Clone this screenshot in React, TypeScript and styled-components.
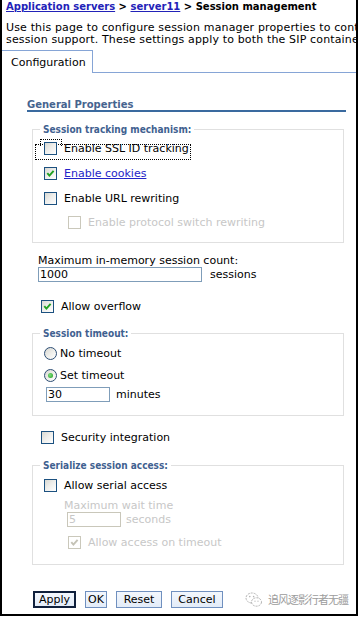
import React from "react";
import styled, { createGlobalStyle } from "styled-components";

const GlobalStyle = createGlobalStyle`
  html, body { margin: 0; padding: 0; background: #fff; }
  body {
    font-family: "DejaVu Sans", Verdana, sans-serif;
    font-size: 11px;
    color: #000;
  }
  * { box-sizing: border-box; }
`;

const Frame = styled.div`
  width: 358px;
  height: 616px;
  border-left: 2px solid #000;
  border-right: 2px solid #000;
  border-bottom: 2px solid #000;
  overflow: hidden;
  display: flex;
  flex-direction: column;
  background: #fff;
`;

const Breadcrumb = styled.div`
  margin-top: 1px;
  padding-left: 4px;
  font-size: 10px;
  font-weight: bold;
  line-height: 12px;
  white-space: nowrap;
`;

const CrumbLink = styled.a`
  color: #2222b8;
  text-decoration: underline;
`;

const Description = styled.div`
  margin-top: 9px;
  padding-left: 4px;
  line-height: 12px;
  letter-spacing: 0.15px;
  white-space: nowrap;
`;

const TabBar = styled.div`
  margin-top: 4px;
  display: flex;
  height: 23px;
`;

const Tab = styled.div`
  width: 91px;
  border-top: 1px solid #86a5d6;
  border-right: 1px solid #86a5d6;
  padding: 5px 0 0 9px;
  line-height: 13px;
`;

const TabFill = styled.div`
  flex: 1;
  border-bottom: 1px solid #86a5d6;
`;

const Body = styled.div`
  padding: 0 10px 0 25px;
  display: flex;
  flex-direction: column;
`;

const SectionHeading = styled.div`
  margin-top: 26px;
  font-size: 10px;
  font-weight: bold;
  line-height: 11px;
  color: #46648f;
  border-bottom: 2px solid #3a6a9f;
`;

const Group = styled.fieldset<{ $top: number; $pb: number }>`
  margin: ${(p) => p.$top}px 2px 0 5px;
  padding: 0 0 ${(p) => p.$pb}px 0;
  border: 1px solid #e0e0e0;
  min-width: 0;
`;

const Legend = styled.legend`
  margin-left: 7px;
  padding: 0 3px;
  font-family: "DejaVu Sans Condensed", "DejaVu Sans", sans-serif;
  font-stretch: condensed;
  font-size: 10px;
  font-weight: bold;
  line-height: 13px;
  color: #3f6190;
`;

const Row = styled.div<{ $mt: number; $ml: number; $gap?: number; $focus?: boolean }>`
  position: relative;
  display: flex;
  align-items: center;
  width: fit-content;
  height: 13px;
  margin-top: ${(p) => p.$mt}px;
  margin-left: ${(p) => p.$ml}px;
  gap: ${(p) => p.$gap ?? 7}px;
  line-height: 13px;
  white-space: nowrap;
  &::after {
    content: "";
    display: ${(p) => (p.$focus ? "block" : "none")};
    position: absolute;
    left: -9px;
    right: -2px;
    top: 2px;
    height: 14px;
    border: 1px dotted #000;
    pointer-events: none;
  }
`;

const Box = styled.span<{ $disabled?: boolean; $focus?: boolean }>`
  position: relative;
  z-index: 1;
  width: 13px;
  height: 13px;
  flex: none;
  border: 1px solid ${(p) => (p.$disabled ? "#cac8bb" : "#1c5180")};
  background: ${(p) =>
    p.$disabled ? "#fff" : "linear-gradient(135deg, #d8d8d2 0%, #ededea 45%, #fff 100%)"};
  display: flex;
  align-items: center;
  justify-content: center;
  &::before {
    content: "";
    display: ${(p) => (p.$focus ? "block" : "none")};
    position: absolute;
    left: -5px;
    top: -4px;
    width: 20px;
    height: 6px;
    border: 1px dotted #000;
    border-bottom: none;
  }
`;

const Radio = styled.span`
  width: 13px;
  height: 13px;
  flex: none;
  border-radius: 50%;
  border: 1px solid #2c4d74;
  background: linear-gradient(135deg, #d6d6d0 0%, #eeeeea 50%, #fff 100%);
  display: flex;
  align-items: center;
  justify-content: center;
`;

const RadioDot = styled.span`
  width: 5px;
  height: 5px;
  border-radius: 50%;
  background: radial-gradient(circle at 40% 40%, #7ee07e, #1f9a1f);
`;

const Label = styled.span<{ $disabled?: boolean }>`
  color: ${(p) => (p.$disabled ? "#c7c7c7" : "#000")};
`;

const LinkLabel = styled.a`
  color: #2424c8;
  text-decoration: underline;
`;

const FieldLabel = styled.div<{ $mt: number; $ml: number; $disabled?: boolean }>`
  margin-top: ${(p) => p.$mt}px;
  margin-left: ${(p) => p.$ml}px;
  line-height: 12px;
  white-space: nowrap;
  color: ${(p) => (p.$disabled ? "#c7c7c7" : "#000")};
`;

const InputRow = styled.div<{ $mt: number; $ml: number; $gap: number; $disabled?: boolean }>`
  display: flex;
  align-items: center;
  height: 15px;
  margin-top: ${(p) => p.$mt}px;
  margin-left: ${(p) => p.$ml}px;
  gap: ${(p) => p.$gap}px;
  white-space: nowrap;
  color: ${(p) => (p.$disabled ? "#c7c7c7" : "#000")};
`;

const TextInput = styled.input<{ $w: number }>`
  width: ${(p) => p.$w}px;
  height: 15px;
  margin: 0;
  padding: 0 0 0 1px;
  border: 1px solid #7f9db9;
  font-family: "DejaVu Sans", Verdana, sans-serif;
  font-size: 11px;
  line-height: 13px;
  color: #000;
  background: #fff;
  outline: none;
  &:disabled {
    border-color: #c9c7ba;
    color: #c7c7c7;
    background: #fff;
  }
`;

const ButtonRow = styled.div`
  display: flex;
  align-items: center;
  gap: 9px;
  margin-top: 26px;
  margin-left: 6px;
  height: 17px;
  white-space: nowrap;
`;

const Button = styled.button<{ $w: number; $primary?: boolean }>`
  flex: none;
  width: ${(p) => p.$w}px;
  height: 17px;
  margin: 0;
  padding: 0;
  font-family: "DejaVu Sans", Verdana, sans-serif;
  font-size: 11px;
  line-height: 13px;
  color: #000;
  background: linear-gradient(#f3f7fd, #e3ecf8);
  border: ${(p) => (p.$primary ? "2px solid #10203c" : "1px solid #7090bf")};
  border-radius: 0;
`;

const Watermark = styled.div`
  flex: none;
  display: flex;
  align-items: center;
  gap: 5px;
  margin-left: 13px;
  color: #9c9c9c;
  white-space: nowrap;
`;

const WatermarkText = styled.span`
  font-family: "Noto Sans CJK SC", "DejaVu Sans", sans-serif;
  font-size: 11px;
  letter-spacing: -1px;
  line-height: 13px;
  white-space: nowrap;
`;

const Check = ({ color }: { color: string }) => (
  <svg width="9" height="9" viewBox="0 0 9 9">
    <polyline points="1.3,4.2 3.4,6.6 7.6,1.8" fill="none" stroke={color} strokeWidth="1.9" />
  </svg>
);

const CheckRow = ({
  mt,
  ml,
  checked,
  disabled,
  focus,
  children,
}: {
  mt: number;
  ml: number;
  checked?: boolean;
  disabled?: boolean;
  focus?: boolean;
  children: React.ReactNode;
}) => (
  <Row $mt={mt} $ml={ml} $focus={focus}>
    <Box $disabled={disabled} $focus={focus}>
      {checked && <Check color={disabled ? "#c4c2b6" : "#21a121"} />}
    </Box>
    {children}
  </Row>
);

const WeChatIcon = () => (
  <svg width="18" height="16" viewBox="0 0 18 16">
    <ellipse cx="7" cy="6" rx="6" ry="5" fill="none" stroke="#b3b3b3" strokeDasharray="2 1" />
    <ellipse cx="11.5" cy="10" rx="5" ry="4.2" fill="#fff" stroke="#b3b3b3" strokeDasharray="2 1" />
    <circle cx="4.8" cy="4.6" r="0.8" fill="#b3b3b3" />
    <circle cx="8.6" cy="4.6" r="0.8" fill="#b3b3b3" />
    <circle cx="10" cy="9.2" r="0.6" fill="#b3b3b3" />
    <circle cx="13" cy="9.2" r="0.6" fill="#b3b3b3" />
  </svg>
);

export default function App() {
  return (
    <>
      <GlobalStyle />
      <Frame>
        <Breadcrumb>
          <CrumbLink href="#">Application servers</CrumbLink> &gt;{" "}
          <CrumbLink href="#">server11</CrumbLink> &gt; Session management
        </Breadcrumb>
        <Description>
          <div>
            Use this page to configure session manager properties to control the behavior of
            Hypertext Transfer Protocol (HTTP)
          </div>
          <div>
            session support. These settings apply to both the SIP container and the Web container.
          </div>
        </Description>
        <TabBar>
          <Tab>Configuration</Tab>
          <TabFill />
        </TabBar>
        <Body>
          <SectionHeading>General Properties</SectionHeading>

          <Group $top={11} $pb={13}>
            <Legend>Session tracking mechanism:</Legend>
            <CheckRow mt={6} ml={11} focus>
              <Label>Enable SSL ID tracking</Label>
            </CheckRow>
            <CheckRow mt={12} ml={11} checked>
              <LinkLabel href="#">Enable cookies</LinkLabel>
            </CheckRow>
            <CheckRow mt={12} ml={11}>
              <Label>Enable URL rewriting</Label>
            </CheckRow>
            <CheckRow mt={11} ml={35} disabled>
              <Label $disabled>Enable protocol switch rewriting</Label>
            </CheckRow>
          </Group>

          <FieldLabel $mt={12} $ml={11}>
            Maximum in-memory session count:
          </FieldLabel>
          <InputRow $mt={0} $ml={11} $gap={8}>
            <TextInput $w={164} defaultValue="1000" />
            <span>sessions</span>
          </InputRow>

          <CheckRow mt={18} ml={14} checked>
            <Label>Allow overflow</Label>
          </CheckRow>

          <Group $top={14} $pb={13}>
            <Legend>Session timeout:</Legend>
            <Row $mt={7} $ml={11} $gap={3}>
              <Radio />
              <Label>No timeout</Label>
            </Row>
            <Row $mt={9} $ml={11} $gap={3}>
              <Radio>
                <RadioDot />
              </Radio>
              <Label>Set timeout</Label>
            </Row>
            <InputRow $mt={5} $ml={13} $gap={6}>
              <TextInput $w={64} defaultValue="30" />
              <span>minutes</span>
            </InputRow>
          </Group>

          <CheckRow mt={15} ml={14}>
            <Label>Security integration</Label>
          </CheckRow>

          <Group $top={15} $pb={15}>
            <Legend>Serialize session access:</Legend>
            <CheckRow mt={7} ml={11}>
              <Label>Allow serial access</Label>
            </CheckRow>
            <FieldLabel $mt={8} $ml={31} $disabled>
              Maximum wait time
            </FieldLabel>
            <InputRow $mt={0} $ml={34} $gap={5} $disabled>
              <TextInput $w={54} defaultValue="5" disabled />
              <span>seconds</span>
            </InputRow>
            <CheckRow mt={9} ml={35} checked disabled>
              <Label $disabled>Allow access on timeout</Label>
            </CheckRow>
          </Group>

          <ButtonRow>
            <Button $w={43} $primary>
              Apply
            </Button>
            <Button $w={22}>OK</Button>
            <Button $w={46}>Reset</Button>
            <Button $w={52}>Cancel</Button>
            <Watermark>
              <WeChatIcon />
              <WatermarkText>追风逐影行者无疆</WatermarkText>
            </Watermark>
          </ButtonRow>
        </Body>
      </Frame>
    </>
  );
}
